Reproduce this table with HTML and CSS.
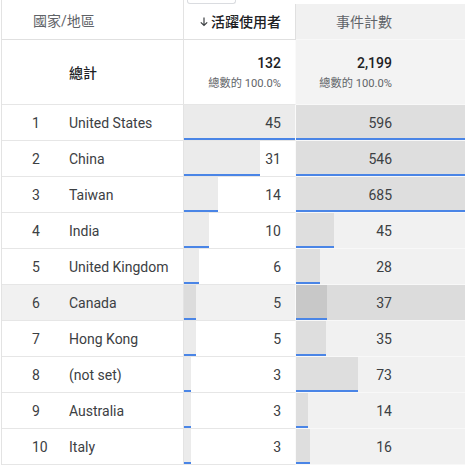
FILE: index.html
```html
<!DOCTYPE html>
<html lang="zh-Hant">
<head>
<meta charset="utf-8">
<link rel="stylesheet" href="styles.css">
</head>
<body>
<div class="page">
  <div class="tip"></div>
  <div class="table">
    <div class="row head">
      <div class="c1 hc">國家/地區</div>
      <div class="c2 hc sorted"><svg class="arrow" width="10" height="11" viewBox="0 0 10 11"><path d="M5 1.5V9.5M1.8 6.3L5 9.5L8.2 6.3" fill="none" stroke="#3c4043" stroke-width="1.2"/></svg>活躍使用者</div>
      <div class="c3 hc"><span class="htext">事件計數</span></div>
    </div>
    <div class="row total">
      <div class="c1"><span class="tl">總計</span></div>
      <div class="c2"><div class="tv"><b>132</b><small>總數的 100.0%</small></div></div>
      <div class="c3"><div class="tv"><b>2,199</b><small>總數的 100.0%</small></div></div>
    </div>
    <div class="row">
      <div class="c1"><span class="rk">1</span><span>United States</span></div>
      <div class="c2 cell"><div class="bar" style="width:111px"></div><span class="val">45</span></div>
      <div class="c3 cell"><div class="bar" style="width:507px"></div><span class="val">596</span></div>
    </div>
    <div class="row">
      <div class="c1"><span class="rk">2</span><span>China</span></div>
      <div class="c2 cell"><div class="bar" style="width:76px"></div><span class="val">31</span></div>
      <div class="c3 cell"><div class="bar" style="width:465px"></div><span class="val">546</span></div>
    </div>
    <div class="row">
      <div class="c1"><span class="rk">3</span><span>Taiwan</span></div>
      <div class="c2 cell"><div class="bar" style="width:34px"></div><span class="val">14</span></div>
      <div class="c3 cell"><div class="bar" style="width:583px"></div><span class="val">685</span></div>
    </div>
    <div class="row">
      <div class="c1"><span class="rk">4</span><span>India</span></div>
      <div class="c2 cell"><div class="bar" style="width:25px"></div><span class="val">10</span></div>
      <div class="c3 cell"><div class="bar" style="width:38px"></div><span class="val">45</span></div>
    </div>
    <div class="row">
      <div class="c1"><span class="rk">5</span><span>United Kingdom</span></div>
      <div class="c2 cell"><div class="bar" style="width:15px"></div><span class="val">6</span></div>
      <div class="c3 cell"><div class="bar" style="width:24px"></div><span class="val">28</span></div>
    </div>
    <div class="row hover">
      <div class="c1"><span class="rk">6</span><span>Canada</span></div>
      <div class="c2 cell"><div class="bar" style="width:12px"></div><span class="val">5</span></div>
      <div class="c3 cell"><div class="bar" style="width:31px"></div><span class="val">37</span></div>
    </div>
    <div class="row">
      <div class="c1"><span class="rk">7</span><span>Hong Kong</span></div>
      <div class="c2 cell"><div class="bar" style="width:12px"></div><span class="val">5</span></div>
      <div class="c3 cell"><div class="bar" style="width:30px"></div><span class="val">35</span></div>
    </div>
    <div class="row">
      <div class="c1"><span class="rk">8</span><span>(not set)</span></div>
      <div class="c2 cell"><div class="bar" style="width:7px"></div><span class="val">3</span></div>
      <div class="c3 cell"><div class="bar" style="width:62px"></div><span class="val">73</span></div>
    </div>
    <div class="row">
      <div class="c1"><span class="rk">9</span><span>Australia</span></div>
      <div class="c2 cell"><div class="bar" style="width:7px"></div><span class="val">3</span></div>
      <div class="c3 cell"><div class="bar" style="width:12px"></div><span class="val">14</span></div>
    </div>
    <div class="row">
      <div class="c1"><span class="rk">10</span><span>Italy</span></div>
      <div class="c2 cell"><div class="bar" style="width:7px"></div><span class="val">3</span></div>
      <div class="c3 cell"><div class="bar" style="width:14px"></div><span class="val">16</span></div>
    </div>
  </div>
</div>
</body>
</html>
```

FILE: styles.css
```css
* { box-sizing: border-box; }
html, body { margin: 0; padding: 0; background: #fff; }
body {
  font-family: Roboto, "Noto Sans CJK TC", sans-serif;
  font-size: 14px;
  color: #3c4043;
  width: 465px;
  height: 471px;
  overflow: hidden;
}
.page { position: relative; }
.tip {
  position: absolute;
  left: 187px;
  top: 0;
  width: 49px;
  height: 4px;
  border: 1px solid #dadce0;
  border-top: none;
  border-radius: 0 0 3px 3px;
  background: #fff;
  z-index: 2;
}
.table {
  margin-left: 1px;
  border-left: 1px solid #e3e3e3;
  width: 464px;
  overflow: hidden;
}
.row {
  display: grid;
  grid-template-columns: 182px 112px minmax(0, 1fr);
  height: 36px;
}
.row > div { border-bottom: 1px solid #e6e6e6; min-width: 0; }
.c1 {
  border-right: 1px solid #e3e3e3;
  display: flex;
  align-items: center;
  padding-left: 30px;
}
.c2 { border-right: 1px solid #fafafa; }
.c3 { background: #f1f1f1; overflow: hidden; }
.row > .c3 { border-bottom-color: #f8f8f8; }

/* header */
.head { height: 40px; }
.head > div { border-bottom-color: #e0e0e0; }
.hc { margin-top: 4px; display: flex; align-items: center; padding-bottom: 1px; }
.head .c1 { color: #5f6368; margin-top: 0; padding-top: 1px; padding-left: 31px; }
.head .c2 {
  background: #fff;
  border-right: 1px solid #e0e0e0;
  justify-content: flex-end;
  padding-right: 14px;
  color: #202124;
  font-weight: 500;
}
.arrow { margin-right: 2px; margin-top: 1px; }
.head .c3 { color: #5f6368; }
.htext { width: 96px; text-align: right; }

/* total */
.total { height: 65px; }
.total .c1 { padding-left: 67px; }
.tl { color: #202124; font-weight: 500; }
.total .c3 { background: #f3f3f3; }
.tv {
  display: flex;
  flex-direction: column;
  align-items: flex-end;
  padding-top: 14px;
}
.total .c2 .tv { padding-right: 14px; }
.total .c3 .tv { width: 96px; }
.tv b { font-weight: 500; color: #202124; font-size: 14px; line-height: 18px; }
.tv small { font-size: 11.2px; color: #5f6368; margin-top: 5px; line-height: 14px; }

/* data rows */
.rk { width: 37px; }
.cell {
  display: grid;
  grid-template-columns: minmax(0, 1fr);
  grid-template-rows: 100%;
}
.cell > * { grid-area: 1 / 1; }
.bar {
  height: 100%;
  justify-self: start;
  border-bottom: 2px solid #4a85e6;
  background: #ebebeb;
}
.c3 .bar { background: #dedede; }
.val { align-self: center; justify-self: end; padding-right: 14px; position: relative; }
.c3 .val { justify-self: start; width: 96px; text-align: right; padding-right: 0; }

.hover .c1, .hover .c2 { background: #f1f1f1; }
.hover .c2 .bar { background: #dcdcdc; }
.hover .c3 { background: #dcdcdc; }
.hover .c3 .bar { background: #c8c8c8; }
```
